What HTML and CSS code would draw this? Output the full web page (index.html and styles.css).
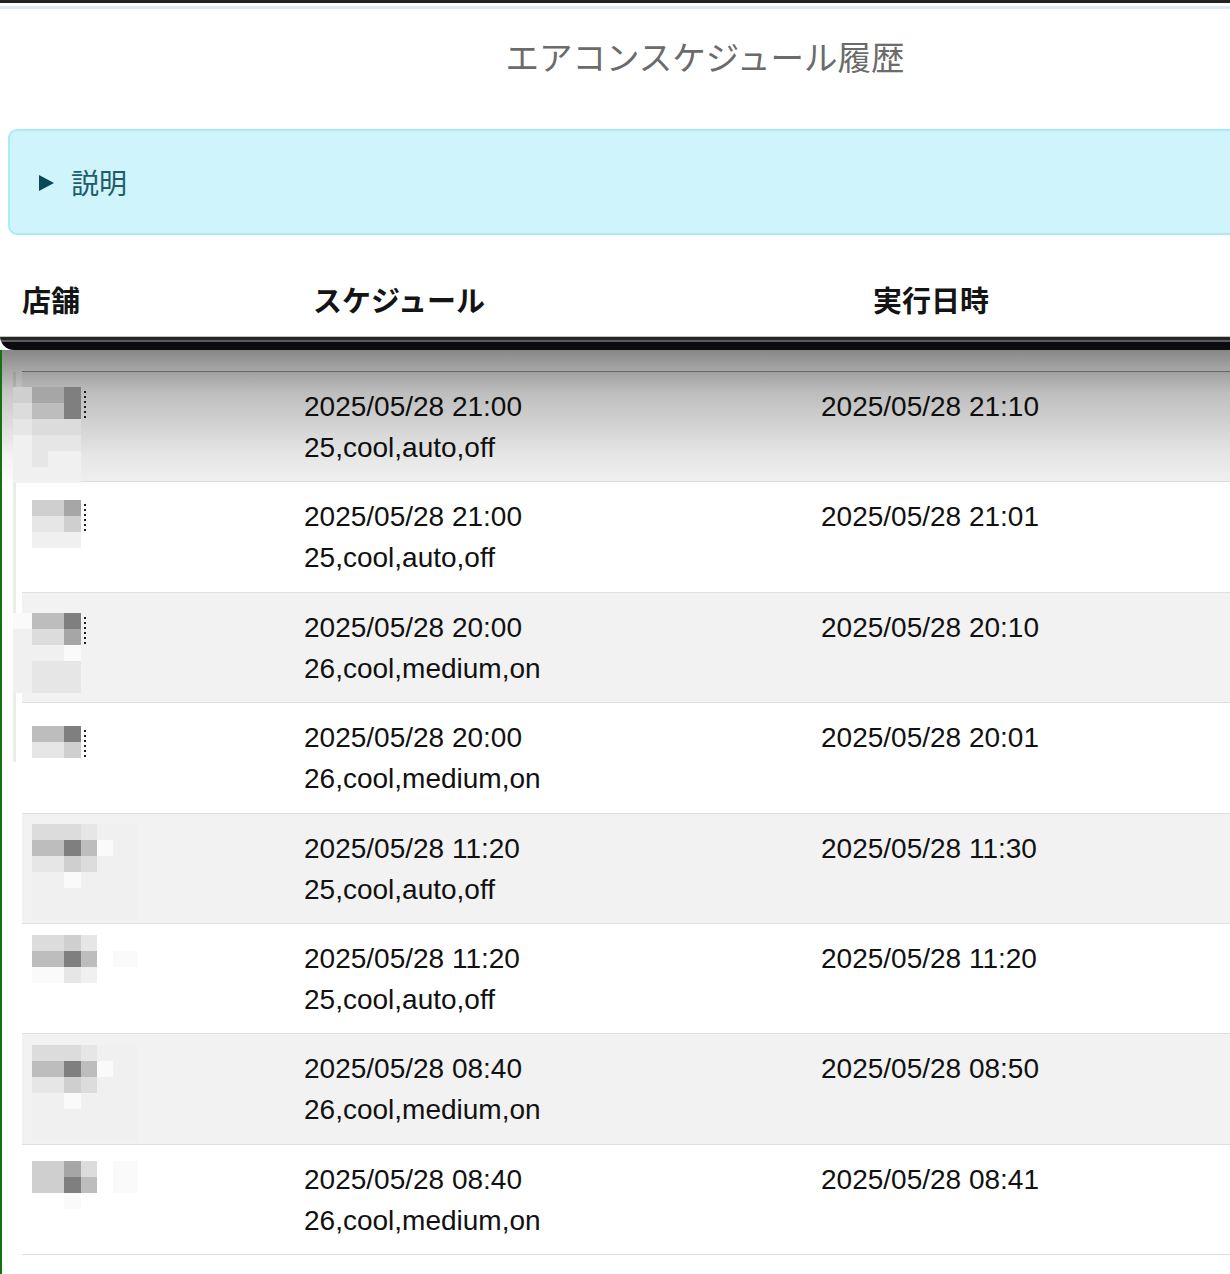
FILE: index.html
```html
<!DOCTYPE html>
<html>
  <head>
    <meta charset="utf-8" />
    <title>エアコンスケジュール履歴</title>
    <link rel="stylesheet" href="styles.css">
  </head>
  <body>
    <div class="topbar"></div>
    <div class="panel">
      <h1 class="title">エアコンスケジュール履歴</h1>
      <div class="alert">
        <svg class="caret" width="15" height="16" viewBox="0 0 15 16"><polygon points="0,0 15,8 0,16" fill="#0b4756"/></svg>
        <span>説明</span>
      </div>
      <div class="head">
        <div>店舗</div>
        <div>スケジュール</div>
        <div>実行日時</div>
      </div>
    </div>
    <div class="edge"></div>

    <div class="content">
      <div class="shade"></div>
      <div class="ghost"></div>
      <div class="rows">

        <div class="row odd">
          <div class="store">
            <div class="pix pa" style="margin-top:1px">
              <i class="c4"></i><i class="c6"></i><i class="c6"></i><i class="c7"></i><i class="dots"></i>
              <i class="c3"></i><i class="c5"></i><i class="c5"></i><i class="c7"></i>
              <i class="c2"></i><i class="c3"></i><i class="c3"></i><i class="c3"></i><i></i>
              <i class="c1"></i><i class="c2"></i><i class="c2"></i><i class="c2"></i><i></i>
              <i class="c1"></i><i class="c2"></i><i class="c1"></i><i class="c1"></i><i></i>
              <i class="c1"></i><i class="c1"></i><i class="c1"></i><i class="c1"></i><i></i>
            </div>
          </div>
          <div>2025/05/28 21:00<br>25,cool,auto,off</div>
          <div>2025/05/28 21:10</div>
        </div>

        <div class="row">
          <div class="store">
            <div class="pix pa" style="margin-top:4px">
              <i></i><i class="c4"></i><i class="c4"></i><i class="c6"></i><i class="dots"></i>
              <i></i><i class="c2"></i><i class="c2"></i><i class="c4"></i>
              <i></i><i class="c1"></i><i class="c1"></i><i class="c1"></i><i></i>
            </div>
          </div>
          <div>2025/05/28 21:00<br>25,cool,auto,off</div>
          <div>2025/05/28 21:01</div>
        </div>

        <div class="row odd">
          <div class="store">
            <div class="pix pa" style="margin-top:6px">
              <i class="c0"></i><i class="c5"></i><i class="c5"></i><i class="c7"></i><i class="dots"></i>
              <i class="c1"></i><i class="c3"></i><i class="c3"></i><i class="c6"></i>
              <i class="c1"></i><i class="c1"></i><i class="c1"></i><i class="c0"></i><i></i>
              <i class="c1"></i><i class="c2"></i><i class="c2"></i><i class="c2"></i><i></i>
              <i class="c1"></i><i class="c2"></i><i class="c2"></i><i class="c2"></i><i></i>
            </div>
          </div>
          <div>2025/05/28 20:00<br>26,cool,medium,on</div>
          <div>2025/05/28 20:10</div>
        </div>

        <div class="row">
          <div class="store">
            <div class="pix pa" style="margin-top:9px">
              <i></i><i class="c5"></i><i class="c5"></i><i class="c7"></i><i class="dots"></i>
              <i></i><i class="c2"></i><i class="c2"></i><i class="c4"></i>
            </div>
          </div>
          <div>2025/05/28 20:00<br>26,cool,medium,on</div>
          <div>2025/05/28 20:01</div>
        </div>

        <div class="row odd">
          <div class="store">
            <div class="pix pb" style="margin-top:-4px">
              <i class="c3"></i><i class="c3"></i><i class="c3"></i><i class="c2"></i><i class="c1"></i><i class="c1"></i>
              <i class="c5"></i><i class="c5"></i><i class="c7"></i><i class="c5"></i><i class="c0"></i><i class="c1"></i>
              <i class="c2"></i><i class="c2"></i><i class="c4"></i><i class="c3"></i><i class="c1"></i><i class="c1"></i>
              <i class="c1"></i><i class="c1"></i><i class="c0"></i><i class="c1"></i><i class="c1"></i><i class="c1"></i>
              <i class="c1"></i><i class="c1"></i><i class="c1"></i><i class="c1"></i><i class="c1"></i><i class="c1"></i>
              <i class="c1"></i><i class="c1"></i><i class="c1"></i><i class="c1"></i><i class="c1"></i><i class="c1"></i>
            </div>
          </div>
          <div>2025/05/28 11:20<br>25,cool,auto,off</div>
          <div>2025/05/28 11:30</div>
        </div>

        <div class="row">
          <div class="store">
            <div class="pix pb" style="margin-top:-3px">
              <i class="c3"></i><i class="c3"></i><i class="c4"></i><i class="c2"></i><i></i><i></i>
              <i class="c5"></i><i class="c5"></i><i class="c7"></i><i class="c5"></i><i></i><i class="c0"></i>
              <i class="c0"></i><i class="c0"></i><i class="c2"></i><i class="c1"></i><i></i><i></i>
            </div>
          </div>
          <div>2025/05/28 11:20<br>25,cool,auto,off</div>
          <div>2025/05/28 11:20</div>
        </div>

        <div class="row odd">
          <div class="store">
            <div class="pix pb" style="margin-top:-3px">
              <i class="c3"></i><i class="c3"></i><i class="c3"></i><i class="c2"></i><i class="c1"></i><i class="c1"></i>
              <i class="c5"></i><i class="c5"></i><i class="c7"></i><i class="c5"></i><i class="c0"></i><i class="c1"></i>
              <i class="c2"></i><i class="c2"></i><i class="c4"></i><i class="c3"></i><i class="c1"></i><i class="c1"></i>
              <i class="c1"></i><i class="c1"></i><i class="c0"></i><i class="c1"></i><i class="c1"></i><i class="c1"></i>
              <i class="c1"></i><i class="c1"></i><i class="c1"></i><i class="c1"></i><i class="c1"></i><i class="c1"></i>
              <i class="c1"></i><i class="c1"></i><i class="c1"></i><i class="c1"></i><i class="c1"></i><i class="c1"></i>
            </div>
          </div>
          <div>2025/05/28 08:40<br>26,cool,medium,on</div>
          <div>2025/05/28 08:50</div>
        </div>

        <div class="row">
          <div class="store">
            <div class="pix pb" style="margin-top:2px">
              <i class="c4"></i><i class="c4"></i><i class="c6"></i><i class="c3"></i><i></i><i class="c0"></i>
              <i class="c4"></i><i class="c4"></i><i class="c7"></i><i class="c5"></i><i></i><i class="c0"></i>
              <i></i><i></i><i class="c0"></i><i></i><i></i><i></i>
            </div>
          </div>
          <div>2025/05/28 08:40<br>26,cool,medium,on</div>
          <div>2025/05/28 08:41</div>
        </div>

      </div>
    </div>
  </body>
</html>
```

FILE: styles.css
```css
body {
  margin: 0;
  background: #fff;
  color: #111;
  font-family: "Liberation Sans", "Noto Sans CJK JP", sans-serif;
  overflow: hidden;
}
.topbar {
  height: 9px;
  background: linear-gradient(#222 0 3px, #fff 3px 6px, #e3e8ee 6px 9px);
}
.panel {
  padding-left: 8px;
}
.title {
  margin: 22px 0 0;
  padding-left: 172px;
  text-align: center;
  font-family: "Noto Sans CJK JP", sans-serif;
  font-weight: 400;
  font-size: 33.5px;
  line-height: 50px;
  color: #6b6b6b;
}
.alert {
  margin: 48px -20px 0 0;
  height: 102px;
  padding-left: 29px;
  display: flex;
  align-items: center;
  background: #cff4fc;
  border: 2px solid #a9ebf8;
  border-radius: 9px;
  color: #1f5d6b;
  font-family: "Noto Sans CJK JP", sans-serif;
  font-size: 28px;
}
.caret {
  margin-right: 17px;
  margin-top: 2px;
}
.head {
  display: grid;
  grid-template-columns: 291px 560px 1fr;
  padding: 44px 0 16px 14px;
  font-family: "Noto Sans CJK JP", sans-serif;
  font-weight: 700;
  font-size: 29px;
  line-height: 41px;
  color: #141414;
}
.edge {
  height: 14px;
  background: linear-gradient(#c4c4c4 0 1px, #262626 1px 4px, #5a5a5a 4px 6px, #0c0c10 6px 14px);
  border-bottom-left-radius: 14px;
}
.content {
  position: relative;
  border-left: 2px solid #137313;
  padding: 21px 0 0 20px;
  min-height: 960px;
}
.shade {
  position: absolute;
  left: 0;
  right: 0;
  top: 0;
  height: 140px;
  background: linear-gradient(rgba(0, 0, 0, 0.47), rgba(0, 0, 0, 0.22) 30%, rgba(0, 0, 0, 0.05) 75%, rgba(0, 0, 0, 0));
  z-index: 1;
  pointer-events: none;
}
.ghost {
  position: absolute;
  left: 11px;
  top: 22px;
  width: 3px;
  height: 390px;
  background: #e8eee8;
}
.rows {
  border-top: 1px solid #9a9a9a;
}
.row {
  display: grid;
  grid-template-columns: 282px 517px 1fr;
  padding: 14px 0 13.4px;
  border-bottom: 1px solid #dcdfe3;
  font-size: 28px;
  line-height: 41px;
}
.row.odd {
  background: #f2f2f2;
}
.store {
  position: relative;
  z-index: 2;
  height: 0;
}
.pix {
  display: grid;
  grid-auto-rows: 16px;
}
.pa {
  margin-left: -9px;
  grid-template-columns: 19px 16px 16px 17px 5px;
}
.pb {
  margin-left: 10px;
  grid-template-columns: 16px 16px 17px 16px 16px 25px;
}
.pix i {
  display: block;
}
.pix .dots {
  grid-row: span 2;
  width: 2px;
  justify-self: end;
  background: repeating-linear-gradient(#1e1e1e 0 2px, transparent 2px 5px);
  margin-top: 4px;
}
.c0 { background: #fafafa; }
.c1 { background: #f0f0f0; }
.c2 { background: #e6e6e6; }
.c3 { background: #dcdcdc; }
.c4 { background: #cfcfcf; }
.c5 { background: #bdbdbd; }
.c6 { background: #a6a6a6; }
.c7 { background: #7f7f7f; }
```
